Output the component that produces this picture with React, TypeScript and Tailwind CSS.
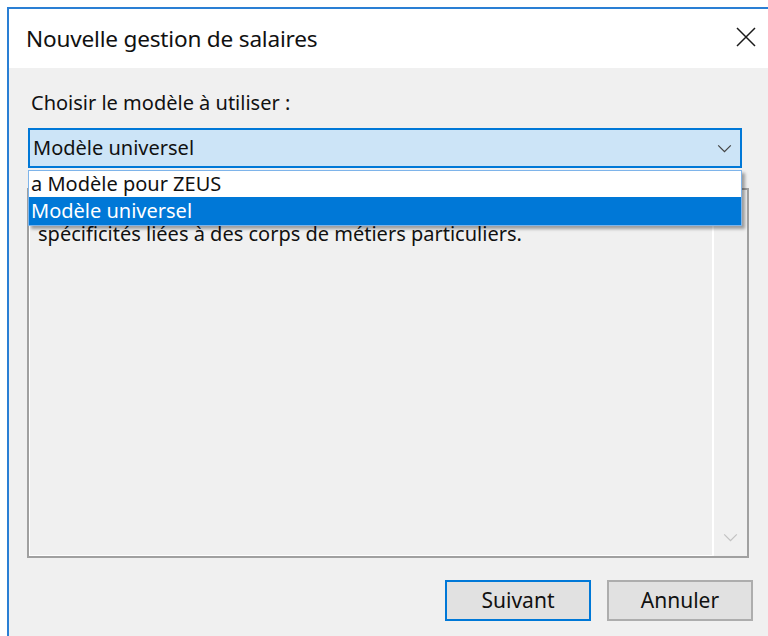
import React from "react";

const font = { fontFamily: '"Noto Sans", "Segoe UI", sans-serif' };

function Chevron({ className }: { className?: string }) {
  return (
    <svg viewBox="0 0 16 10" className={className} fill="none">
      <path d="M1 1.5 L8 8.5 L15 1.5" stroke="currentColor" strokeWidth="1.4" />
    </svg>
  );
}

function CloseIcon() {
  return (
    <svg viewBox="0 0 20 20" className="w-[20px] h-[20px] text-[#1a1a1a] -mt-[3px]" fill="none">
      <path d="M1 1 L19 19 M19 1 L1 19" stroke="currentColor" strokeWidth="1.5" />
    </svg>
  );
}

const models = ["a Modèle pour ZEUS", "Modèle universel"];

export default function App() {
  const selected = 1;
  return (
    <div className="w-[768px] h-[636px] bg-white overflow-hidden" style={font}>
      <div className="ml-[7px] mt-[7px] h-[629px] border-l-2 border-t-2 border-[#2a7fd4] flex flex-col">
        {/* title bar */}
        <div className="h-[59px] bg-white flex items-center justify-between pl-[17px] pr-[12px] shrink-0">
          <span className="text-[22.6px] text-[#111] tracking-[-0.2px]">Nouvelle gestion de salaires</span>
          <CloseIcon />
        </div>

        {/* dialog body */}
        <div className="flex-1 bg-[#f0f0f0] pl-[19px] pr-[6px] pt-[22px]">
          <div className="pl-[3px] text-[20px] leading-[26px] text-[#111]">Choisir le modèle à utiliser :</div>

          <div className="relative mt-[12px] w-[714px] z-10">
            <div className="h-[40px] border-2 border-[#0078d7] bg-[#cce4f7] flex items-center justify-between pl-[3px] pr-[8px]">
              <span className="text-[20px] text-[#111]">{models[selected]}</span>
              <Chevron className="w-[15px] h-[9px] text-[#444]" />
            </div>
            <div className="absolute left-0 top-[42px] w-[714px] border border-[#7eb4ea] bg-white shadow-[3px_3px_3px_rgba(0,0,0,0.35)]">
              {models.map((m, i) => (
                <div
                  key={m}
                  className={
                    i === selected
                      ? "h-[28px] bg-[#0078d7] text-white text-[20px] leading-[28px] pl-[2px]"
                      : "h-[26px] bg-white text-[#111] text-[20px] leading-[26px] pl-[2px]"
                  }
                >
                  {m}
                </div>
              ))}
            </div>
          </div>

          {/* description box */}
          <div className="mt-[20px] -ml-px w-[722px] h-[370px] border-2 border-[#a0a0a0] flex">
            <div className="flex-1 border border-white pl-[8px] pt-[35px] text-[20px] leading-[16px] text-[#111]">
              spécificités liées à des corps de métiers particuliers.
            </div>
            <div className="w-[34px] border-l border-white flex flex-col justify-end items-center pb-[14px]">
              <Chevron className="w-[15px] h-[9px] text-[#c2c2c2]" />
            </div>
          </div>

          {/* buttons */}
          <div className="mt-[22px] flex justify-end gap-[16px] w-[725px]">
            <button className="w-[146px] h-[41px] border-2 border-[#0078d7] bg-[#e1e1e1] text-[21px] text-[#111]">
              Suivant
            </button>
            <button className="w-[146px] h-[41px] border-2 border-[#adadad] bg-[#e1e1e1] text-[21px] text-[#111]">
              Annuler
            </button>
          </div>
        </div>
      </div>
    </div>
  );
}
